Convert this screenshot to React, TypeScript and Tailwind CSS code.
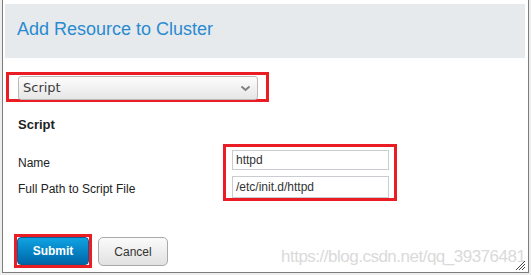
const sans = { fontFamily: '"Liberation Sans", Arial, sans-serif' };

const App = () => {
  return (
    <div className="w-[531px] h-[275px] bg-[#eeeeee] overflow-hidden" style={sans}>
      <div className="relative ml-[2px] w-[527px] h-[273px] bg-white border-x border-b border-[#7d7d7d] pt-[4px] pl-[2px] pr-[3px]">
        {/* Header */}
        <div className="h-[54px] bg-[#e6eaed] pl-[12px] pb-[4px] flex items-center">
          <h2 className="text-[18px] leading-[22px] text-[#2a8ad0]">Add Resource to Cluster</h2>
        </div>

        {/* Resource type */}
        <div className="mt-[14px] ml-[1px] w-[263px] h-[30px] border-[3px] border-[#ea1c24] pl-[9px] pt-px">
          <div className="w-[240px] h-[24px] rounded-[3px] border border-[#b9b9b9] bg-linear-to-b from-[#fdfdfd] to-[#e6e6e6] flex items-center justify-between pl-[4px] pr-[6px]">
            <span className="text-[13px] text-[#3c3c3c]" style={{ fontFamily: '"DejaVu Sans", sans-serif' }}>
              Script
            </span>
            <svg width="11" height="7" viewBox="0 0 11 7">
              <polyline points="1.5,1.5 5.5,5 9.5,1.5" fill="none" stroke="#808080" strokeWidth="2" />
            </svg>
          </div>
        </div>

        <h3 className="mt-[15px] pl-[13px] text-[13px] leading-[16px] font-bold text-[#222]">Script</h3>

        {/* Fields */}
        <div className="mt-[11px] flex">
          <div className="w-[218px] pl-[13px] pt-[11px] flex flex-col gap-[10px] text-[12px] leading-[16px] text-[#222]">
            <span>Name</span>
            <span>Full Path to Script File</span>
          </div>
          <div className="w-[174px] h-[57px] border-[3px] border-[#ea1c24] pl-[6px] pt-[3px] overflow-hidden flex flex-col gap-[6px]">
            <div className="w-[157px] h-[20px] border border-[#c9cdd1] pl-[3px] flex items-center text-[12px] text-[#333]">
              httpd
            </div>
            <div className="w-[157px] h-[22px] shrink-0 border border-[#c9cdd1] pl-[3px] flex items-center text-[12px] text-[#333]">
              /etc/init.d/httpd
            </div>
          </div>
        </div>

        {/* Buttons */}
        <div className="mt-[33px] ml-[9px] flex items-start gap-[6px]">
          <div className="w-[78px] h-[34px] border-[3px] border-[#ea1c24]">
            <button className="w-[72px] h-[28px] rounded-[4px] border border-[#0b5d93] bg-linear-to-b from-[#10a3e3] to-[#0266a8] text-white text-[12px] font-bold">
              Submit
            </button>
          </div>
          <button className="mt-[3px] w-[70px] h-[29px] rounded-[5px] border border-[#a9a9a9] bg-linear-to-b from-[#fbfbfb] to-[#e1e1e1] text-[12px] text-[#333]">
            Cancel
          </button>
        </div>

        {/* Watermark */}
        <div className="absolute left-[278px] top-[247px] text-[17px] leading-[20px] tracking-[-0.5px] text-[#dadada] whitespace-nowrap pointer-events-none">
          https://blog.csdn.net/qq_39376481
        </div>

        {/* Resize grip */}
        <svg className="absolute right-[2px] bottom-[1px]" width="11" height="11" viewBox="0 0 11 11">
          <line x1="1" y1="10" x2="10" y2="1" stroke="#444" strokeWidth="1" />
          <line x1="4" y1="10" x2="10" y2="4" stroke="#444" strokeWidth="1" />
          <line x1="7" y1="10" x2="10" y2="7" stroke="#444" strokeWidth="1" />
        </svg>
      </div>
    </div>
  );
};

export default App;
